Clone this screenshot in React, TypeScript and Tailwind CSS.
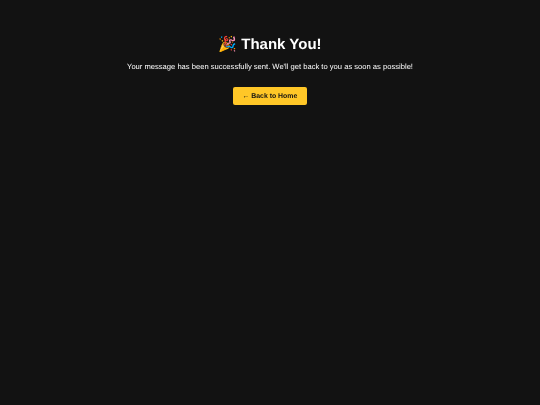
export default function App() {
  return (
    <div className="min-h-[405px] bg-[#121212] text-white text-center pt-[35px] font-['Liberation_Sans','Noto_Color_Emoji',sans-serif] [text-rendering:geometricPrecision]">
      <h1 className="text-[15px] leading-[20px] font-bold mb-[6px] will-change-transform">🎉 Thank You!</h1>
      <p className="text-[7.6px] leading-[12px] mb-[9px] text-white will-change-transform">Your message has been successfully sent. We'll get back to you as soon as possible!</p>
      <a className="inline-block bg-[#ffc727] text-[#121212] text-[6.9px] font-bold px-[9.5px] pt-[5px] pb-[3px] rounded-[2px] leading-[10px] will-change-transform">← Back to Home</a>
    </div>
  );
}
